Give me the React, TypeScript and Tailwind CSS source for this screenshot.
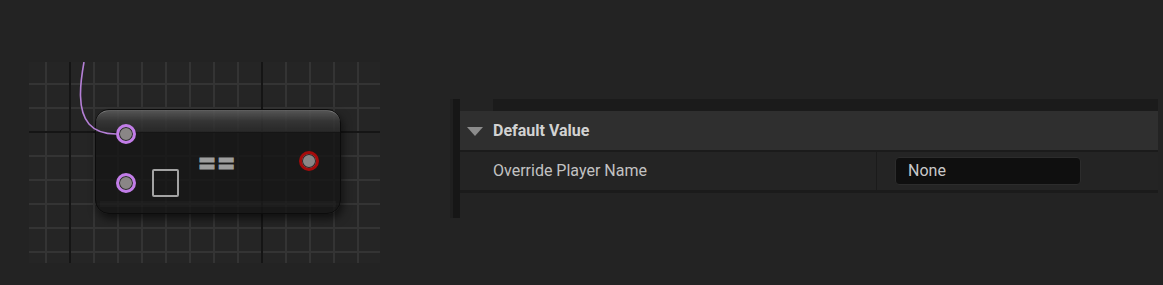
const GRID_W = 351;
const GRID_H = 201;
const V_LINES = Array.from({ length: 14 }, (_, i) => 17 + i * 24);
const H_LINES = Array.from({ length: 8 }, (_, i) => 22 + i * 24);
const DARK_V = [41, 233];
const DARK_H = [70];

function GridLines() {
  return (
    <svg className="absolute inset-0" width={GRID_W} height={GRID_H}>
      {V_LINES.filter((x) => !DARK_V.includes(x)).map((x) => (
        <rect key={"v" + x} x={x - 1} y={0} width={2} height={GRID_H} fill="#343434" />
      ))}
      {H_LINES.filter((y) => !DARK_H.includes(y)).map((y) => (
        <rect key={"h" + y} x={0} y={y - 1} width={GRID_W} height={2} fill="#343434" />
      ))}
      {DARK_V.map((x) => (
        <rect key={"dv" + x} x={x - 1} y={0} width={2} height={GRID_H} fill="#151515" />
      ))}
      {DARK_H.map((y) => (
        <rect key={"dh" + y} x={0} y={y - 1} width={GRID_W} height={2} fill="#151515" />
      ))}
    </svg>
  );
}

function Pin({ ring }: { ring: string }) {
  return (
    <div
      className={`h-[20px] w-[20px] shrink-0 rounded-full border-[3px] bg-[#8a8686] shadow-[inset_0_0_0_1px_#2a2a2a] ${ring}`}
    />
  );
}

function EqualNode() {
  return (
    <div className="absolute left-[66px] top-[47px] h-[105px] w-[246px] rounded-[14px] border border-[#0c0c0c] bg-[rgba(22,22,22,0.82)] shadow-[2px_5px_8px_rgba(0,0,0,0.55)]">
      {/* glossy header */}
      <div className="absolute inset-x-0 top-0 h-[22px] rounded-t-[13px] border-t border-[rgba(255,255,255,0.25)] bg-gradient-to-b from-[rgba(255,255,255,0.26)] via-[rgba(255,255,255,0.12)] to-[rgba(255,255,255,0.07)]" />
      <div className="absolute inset-x-[4px] bottom-[6px] h-[6px] bg-[rgba(255,255,255,0.025)]" />
      <div className="relative flex items-start pl-[20px] pt-[14px]">
        <div className="flex flex-col gap-[25px]">
          <Pin ring="border-[#c27de8]" />
          <div className="flex items-center gap-[16px]">
            <Pin ring="border-[#c27de8]" />
            <div className="h-[28px] w-[27px] rounded-[2px] border-2 border-[#a3a3a3]" />
          </div>
        </div>
        <div className="ml-[19px] mt-[22px] flex h-[33px] items-center font-['Roboto',sans-serif] text-[31px] font-black leading-none tracking-[1px] text-[#9e9e9e] [-webkit-text-stroke:1px_#9e9e9e]">
          ==
        </div>
        <div className="ml-auto mr-[21px] mt-[27px]">
          <Pin ring="border-[#a50b0b]" />
        </div>
      </div>
    </div>
  );
}

function GraphPreview() {
  return (
    <div className="relative ml-[29px] mt-[62px] h-[201px] w-[351px] shrink-0 overflow-hidden bg-[#252525]">
      <GridLines />
      <EqualNode />
      <svg className="absolute inset-0" width={GRID_W} height={GRID_H}>
        <path
          d="M55 0 C51 22 48 48 60 62 C67 70 76 72 87 72"
          fill="none"
          stroke="#b47fd6"
          strokeWidth={1.6}
        />
      </svg>
    </div>
  );
}

function DetailsPanel() {
  return (
    <div className="ml-[70px] mt-[99px] flex h-[119px] w-[708px] shrink-0 font-['Roboto',sans-serif]">
      <div className="flex w-[10px] shrink-0">
        <div className="w-[3px] bg-[#1f1f1f]" />
        <div className="w-[7px] bg-[#161616]" />
      </div>
      <div className="flex min-w-0 flex-1 flex-col">
        <div className="flex h-[12px] pl-[33px]">
          <div className="flex-1 bg-[#1b1b1b]" />
        </div>
        <div className="flex h-[39px] items-center bg-[#2f2f2f] pl-[7px]">
          <svg width="16" height="10" viewBox="0 0 16 10" className="shrink-0">
            <polygon points="0,1 16,1 8,10" fill="#8c8c8c" />
          </svg>
          <span className="ml-[10px] text-[16px] font-bold text-[#d2d2d2]">Default Value</span>
        </div>
        <div className="h-[2px] bg-[#1b1b1b]" />
        <div className="flex h-[38px] bg-[#242424]">
          <div className="flex w-[417px] items-center border-r border-[#1b1b1b] pl-[33px] text-[16px] text-[#c2c2c2]">
            Override Player Name
          </div>
          <div className="flex items-center pl-[18px]">
            <div className="flex h-[28px] w-[186px] items-center rounded-[4px] border border-[#2c2c2c] bg-[#0f0f0f] pl-[12px] text-[16px] text-[#c8c8c8]">
              None
            </div>
          </div>
        </div>
        <div className="h-[3px] bg-[#1b1b1b]" />
      </div>
    </div>
  );
}

export default function App() {
  return (
    <div className="flex h-[285px] w-[1163px] items-start overflow-hidden bg-[#232323]">
      <GraphPreview />
      <DetailsPanel />
    </div>
  );
}
